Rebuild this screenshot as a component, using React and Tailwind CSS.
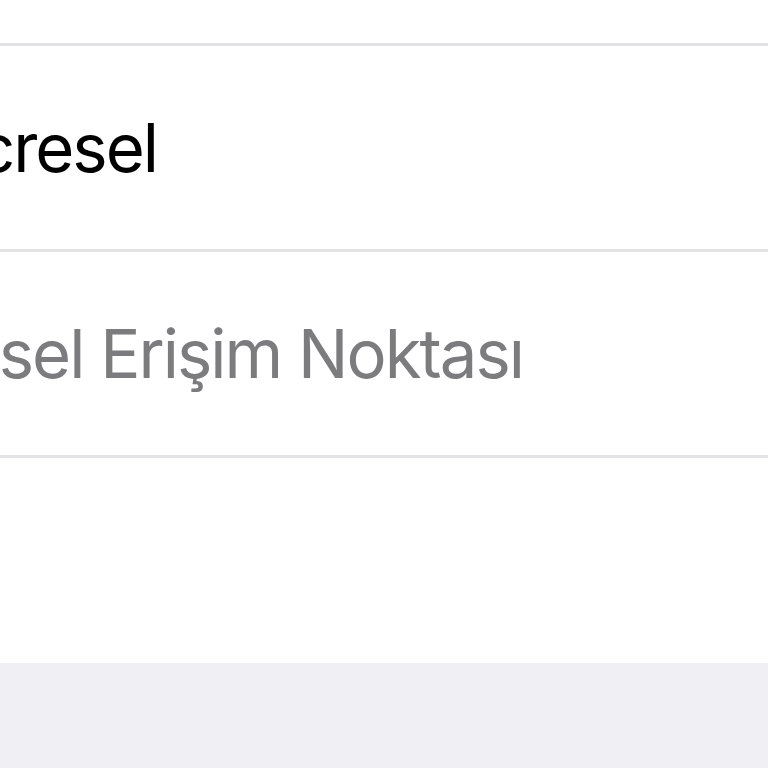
export default function App() {
  const rows = [
    { label: 'Hücresel', end: 'w-[157px]', color: 'text-black' },
    { label: 'Kişisel Erişim Noktası', end: 'w-[523px]', color: 'text-[#7c7c7f]' },
  ];

  return (
    <div
      className="w-[768px] h-[768px] overflow-hidden bg-white flex flex-col"
      style={{ fontFamily: 'Inter, "Noto Sans", sans-serif' }}
    >
      <div className="h-[43px] shrink-0 bg-white" />
      {rows.map((r) => (
        <div key={r.label} className="shrink-0 border-t-[3px] border-[#e3e3e6]">
          <div className="h-[203px] flex items-center">
            <div className={`${r.end} flex justify-end`}>
              <span className={`shrink-0 whitespace-nowrap text-[67px] leading-none tracking-[-2px] ${r.color}`}>
                {r.label}
              </span>
            </div>
          </div>
        </div>
      ))}
      <div className="shrink-0 border-t-[3px] border-[#e3e3e6] h-[208px] bg-white" />
      <div className="flex-1 bg-[#f0eff4]" />
    </div>
  );
}
